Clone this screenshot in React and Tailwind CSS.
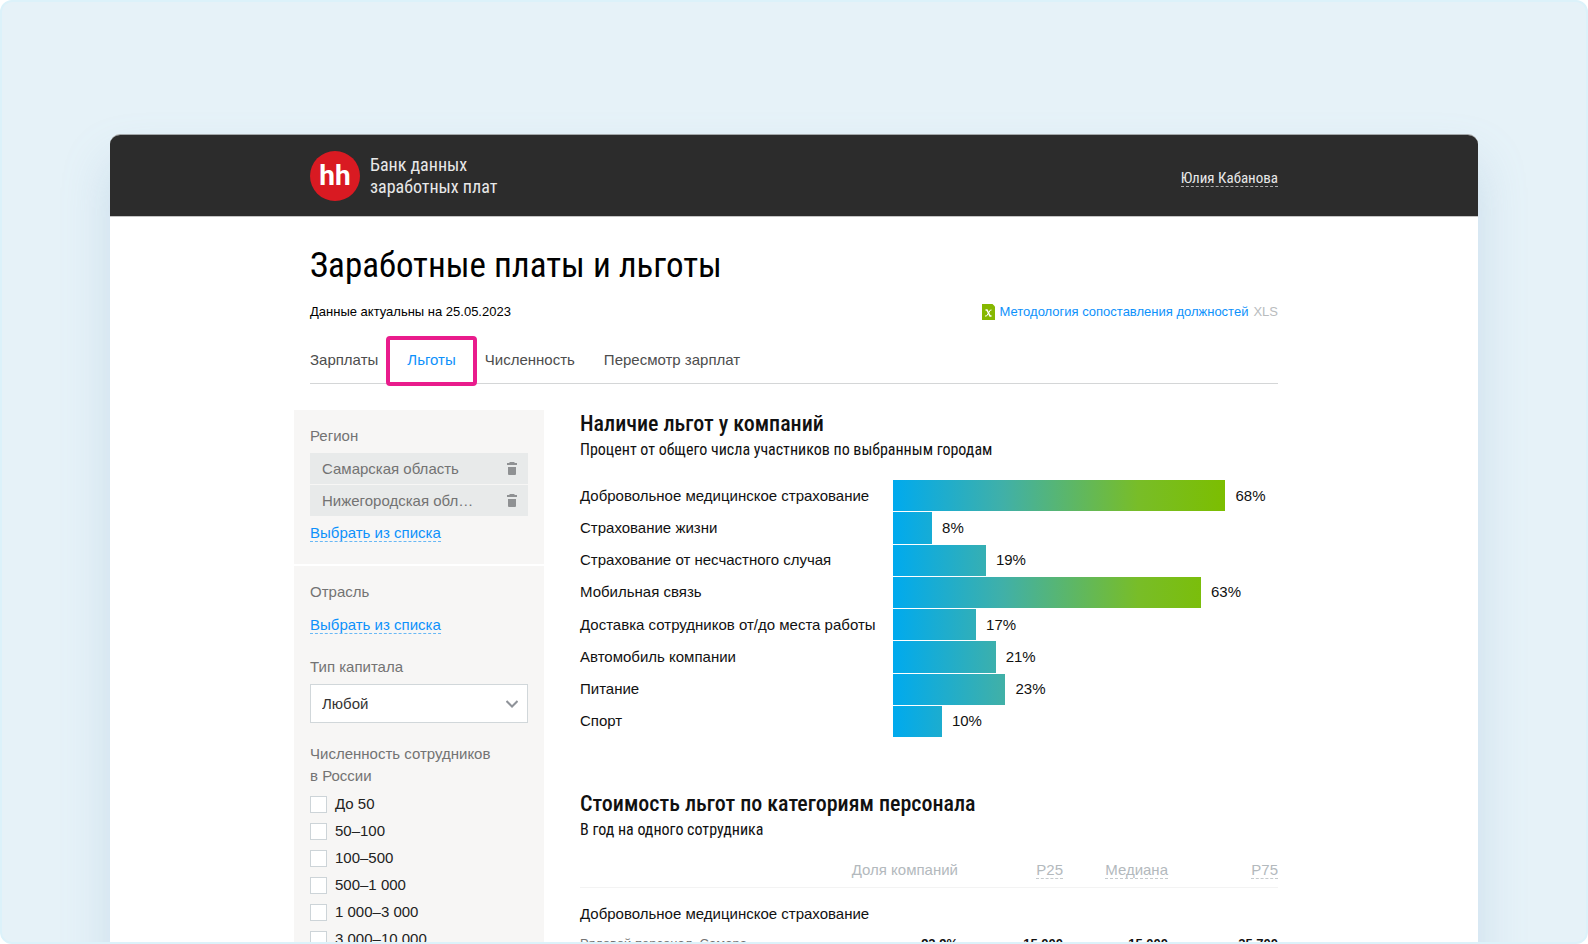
import { useState } from 'react';

const TABS = ['Зарплаты', 'Льготы', 'Численность', 'Пересмотр зарплат'];

const BENEFITS = [
  { label: 'Добровольное медицинское страхование', value: 68 },
  { label: 'Страхование жизни', value: 8 },
  { label: 'Страхование от несчастного случая', value: 19 },
  { label: 'Мобильная связь', value: 63 },
  { label: 'Доставка сотрудников от/до места работы', value: 17 },
  { label: 'Автомобиль компании', value: 21 },
  { label: 'Питание', value: 23 },
  { label: 'Спорт', value: 10 }
];

const HEADCOUNTS = ['До 50', '50–100', '100–500', '500–1 000', '1 000–3 000', '3 000–10 000'];

const TrashIcon = () => (
  <svg width="10" height="13" viewBox="0 0 10 13" fill="#8f9193" aria-hidden="true">
    <path d="M2.500 0h5v1H10v2H0V1h2.500z" />
    <path d="M1 5h8v7a1 1 0 0 1-1 1H2a1 1 0 0 1-1-1z" />
  </svg>
);

const XlsIcon = () => (
  <svg width="13" height="16" viewBox="0 0 13 16" aria-hidden="true">
    <path d="M0 0h10.500L13 2.500V16H0z" fill="#86b800" />
    <path d="M3.500 6h1.500l3 6h1.500" fill="none" stroke="#fff" strokeWidth="1.600" />
    <path d="M9.500 6H8.500l-4 6H3" fill="none" stroke="#fff" strokeWidth="1" />
  </svg>
);

const Header = () => (
  <header className="border-b border-[#c4c4c4] bg-[#2c2c2c]">
    <div className="mx-auto flex h-[81px] max-w-[968px] items-center justify-between font-['Roboto_Condensed',Roboto,sans-serif] text-[#e8e8e8]">
      <div className="flex items-center gap-2.5">
        <div className="flex size-[50px] items-center justify-center rounded-full bg-[#d91a22] font-['Roboto',sans-serif] text-[28px] leading-none font-bold text-white">
          hh
        </div>
        <p className="text-lg leading-[22px]">
          Банк данных
          <br />
          заработных плат
        </p>
      </div>
      <button className="mt-1.5 border-b border-dashed border-[#aaa] text-[15px] leading-4">
        Юлия Кабанова
      </button>
    </div>
  </header>
);

const Tabs = ({ active, onChange }) => (
  <nav className="mt-3.5 flex gap-[29px] border-b border-[#d4d6d7] text-[15px] leading-5 text-[#4d4d4d]">
    {TABS.map((tab) => (
      <div key={tab} className="relative pt-3.5 pb-[13px]">
        <button
          onClick={() => onChange(tab)}
          className={tab === active ? 'text-[#0d91fb]' : ''}
        >
          {tab}
        </button>
        {tab === active ? (
          <span className="pointer-events-none absolute -inset-x-[21px] top-0 -bottom-[3px] rounded-sm border-4 border-[#e91c8c]" />
        ) : null}
      </div>
    ))}
  </nav>
);

const PickLink = () => (
  <a href="#list" className="inline-block border-b border-dashed border-[#69b8f5] leading-4 text-[#0d91fb]">
    Выбрать из списка
  </a>
);

const Sidebar = () => {
  const [regions, setRegions] = useState(['Самарская область', 'Нижегородская обл…']);

  return (
    <aside className="-ml-4 w-[250px] shrink-0 text-[15px] leading-[22px] text-[#737373]">
      <section className="bg-[#f7f6f5] px-4 pt-[15px] pb-5">
        <h3>Регион</h3>
        <ul className="mt-1.5 grid gap-px">
          {regions.map((region) => (
            <li key={region} className="flex h-[31px] items-center justify-between bg-[#e8eaea] pr-[11px] pl-3">
              <span>{region}</span>
              <button
                aria-label="Удалить"
                onClick={() => setRegions(regions.filter((item) => item !== region))}
              >
                <TrashIcon />
              </button>
            </li>
          ))}
        </ul>
        <div className="mt-1.5">
          <PickLink />
        </div>
      </section>

      <section className="mt-0.5 bg-[#f7f6f5] px-4 pt-[15px] pb-6">
        <h3>Отрасль</h3>
        <div className="mt-[11px]">
          <PickLink />
        </div>

        <label htmlFor="capital" className="mt-5 block">
          Тип капитала
        </label>
        <div className="relative mt-1.5">
          <select
            id="capital"
            className="h-[39px] w-full appearance-none border border-[#d1d7da] bg-white px-[11px] text-[#333]"
          >
            <option>Любой</option>
          </select>
          <svg
            className="pointer-events-none absolute top-4 right-2.5"
            width="12"
            height="8"
            viewBox="0 0 12 8"
            fill="none"
            stroke="#8f9399"
            strokeWidth="2"
            aria-hidden="true"
          >
            <path d="M.5 1L6 6.500 11.500 1" />
          </svg>
        </div>

        <fieldset className="mt-5">
          <legend>
            Численность сотрудников
            <br />в России
          </legend>
          <div className="mt-1.5 grid gap-[5px]">
            {HEADCOUNTS.map((range) => (
              <label key={range} className="flex items-center gap-2 text-[#222]">
                <input type="checkbox" className="size-[17px] appearance-none border border-[#cdd4d8] bg-white" />
                {range}
              </label>
            ))}
          </div>
        </fieldset>
      </section>
    </aside>
  );
};

const SectionTitle = ({ title, note }) => (
  <div className="font-['Roboto_Condensed',Roboto,sans-serif]">
    <h2 className="text-[22px] leading-7 font-medium">{title}</h2>
    <p className="text-base leading-6">{note}</p>
  </div>
);

const BenefitsChart = () => (
  <div className="mt-[18px] grid h-[258px] auto-rows-fr">
    {BENEFITS.map(({ label, value }) => (
      <div key={label} className="flex items-center border-b border-white">
        <span className="w-[313px] shrink-0">{label}</span>
        <div className="flex flex-1 items-center self-stretch">
          <div
            className="h-full bg-[linear-gradient(90deg,#00aaee_0,#40b0a8_110px,#78bd28_245px,#7cbe00_333px)]"
            style={{ width: `${value * 1.27}%` }}
          />
          <span className="ml-2.5">{value}%</span>
        </div>
      </div>
    ))}
  </div>
);

const CostTable = () => (
  <table className="mt-[17px] w-full text-right">
    <thead className="border-b border-[#f3f3f3] text-[#b3b9bd]">
      <tr>
        <th />
        <th className="pb-1.5 font-normal">Доля компаний</th>
        <th className="w-[105px] pb-1.5 font-normal">
          <abbr className="border-b border-dashed border-[#c5cacd]">P25</abbr>
        </th>
        <th className="w-[105px] pb-1.5 font-normal">
          <abbr className="border-b border-dashed border-[#c5cacd]">Медиана</abbr>
        </th>
        <th className="w-[110px] pb-1.5 font-normal">
          <abbr className="border-b border-dashed border-[#c5cacd]">P75</abbr>
        </th>
      </tr>
    </thead>
    <tbody>
      <tr>
        <th colSpan={5} className="pt-[15px] pb-2 text-left font-normal">
          Добровольное медицинское страхование
        </th>
      </tr>
      <tr className="text-[13px] font-bold">
        <td className="text-left font-normal text-[#737373]">Рядовой персонал, Самара</td>
        <td>92,9%</td>
        <td>15 000</td>
        <td>15 000</td>
        <td>25 700</td>
      </tr>
    </tbody>
  </table>
);

const App = () => {
  const [tab, setTab] = useState('Льготы');

  return (
    <div className="h-screen overflow-hidden rounded-xl border-2 border-[#dcf2fa] bg-[#e6f2f8] px-[108px] pt-[132px] font-['Liberation_Sans',Arial,sans-serif] text-black">
      <div className="min-h-full rounded-t-[10px] bg-white shadow-[0_28px_48px_0_rgba(130,170,205,0.28)]">
        <div className="overflow-hidden rounded-t-[10px] border-t border-[#a3a8aa]">
          <Header />
        </div>

        <main className="mx-auto max-w-[968px] pt-[27px]">
          <h1 className="font-['Roboto_Condensed',Roboto,sans-serif] text-[35px] leading-[44px]">
            Заработные платы и льготы
          </h1>
          <div className="mt-3.5 flex items-center justify-between text-[13px] leading-5">
            <p>Данные актуальны на 25.05.2023</p>
            <div className="flex items-center gap-[5px] text-[#b9bcbe]">
              <XlsIcon />
              <a href="#xls" className="text-[#0d91fb]">
                Методология сопоставления должностей
              </a>
              <span>XLS</span>
            </div>
          </div>

          <Tabs active={tab} onChange={setTab} />

          <div className="mt-[26px] flex items-start gap-9">
            <Sidebar />
            <div className="flex-1 text-[15px] leading-[22px] text-[#111]">
              <SectionTitle title="Наличие льгот у компаний" note="Процент от общего числа участников по выбранным городам" />
              <BenefitsChart />
              <div className="mt-[52px]">
                <SectionTitle title="Стоимость льгот по категориям персонала" note="В год на одного сотрудника" />
                <CostTable />
              </div>
            </div>
          </div>
        </main>
      </div>
    </div>
  );
};

export default App;
